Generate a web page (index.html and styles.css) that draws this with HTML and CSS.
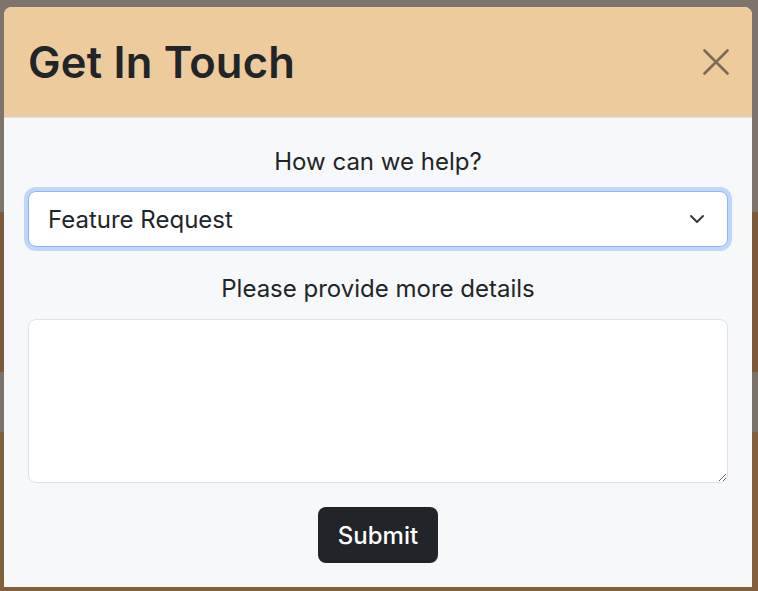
FILE: index.html
```html
<!DOCTYPE html>
<html lang="en">
<head>
<meta charset="utf-8">
<title>Get In Touch</title>
<link rel="stylesheet" href="styles.css">
</head>
<body>
<div class="backdrop">
  <div class="band band-gray"></div>
  <div class="band band-brown"></div>
  <div class="band band-gray2"></div>
  <div class="band band-brown2"></div>
</div>
<div class="modal">
  <div class="modal-header">
    <h1 class="modal-title">Get In Touch</h1>
    <button class="btn-close" aria-label="Close">
      <svg width="26" height="26" viewBox="0 0 26 26"><path d="M1.5 1.5 L24.5 24.5 M24.5 1.5 L1.5 24.5" stroke="currentColor" stroke-width="2.6" stroke-linecap="round"/></svg>
    </button>
  </div>
  <form class="modal-body">
    <label class="form-label" for="topic">How can we help?</label>
    <div class="select-wrap">
      <select id="topic" class="form-select">
        <option>Feature Request</option>
      </select>
      <svg class="chev" width="16" height="16" viewBox="0 0 16 16"><path d="M2 5 L8 11 L14 5" fill="none" stroke="#343a40" stroke-width="2" stroke-linecap="round" stroke-linejoin="round"/></svg>
    </div>
    <label class="form-label second" for="details">Please provide more details</label>
    <textarea id="details" class="form-control"></textarea>
    <div class="actions">
      <button type="button" class="btn-submit">Submit</button>
    </div>
  </form>
</div>
</body>
</html>
```
FILE: styles.css
```css
html, body {
  margin: 0;
  padding: 0;
  height: 100%;
  overflow: hidden;
}
body {
  font-family: Inter, "Noto Sans", sans-serif;
  color: #212529;
  position: relative;
}
.backdrop {
  position: absolute;
  inset: 0;
  display: flex;
  flex-direction: column;
}
.band { flex: none; }
.band-gray { height: 212px; background: #7d756c; }
.band-brown { height: 160px; background: #7c5a3a; }
.band-gray2 { height: 60px; background: #7a736b; }
.band-brown2 { flex: 1; background: #82603d; }

.modal {
  position: absolute;
  left: 4px;
  top: 7px;
  width: 748px;
  height: 580px;
  background: #f7f8fa;
  border-radius: 8px 8px 0 0;
  overflow: hidden;
}
.modal-header {
  height: 110px;
  background: #eecb9c;
  border-bottom: 1px solid #dee2e6;
  display: flex;
  align-items: center;
  justify-content: space-between;
  padding: 0 23px 0 24px;
}
.modal-title {
  margin: 0;
  font-size: 43.5px;
  font-weight: 600;
  letter-spacing: 0.2px;
  line-height: 1;
  padding-top: 2px;
}
.btn-close {
  border: 0;
  background: transparent;
  padding: 0;
  width: 26px;
  height: 26px;
  color: #7a6a58;
  display: flex;
  cursor: pointer;
}
.modal-body {
  display: flex;
  flex-direction: column;
  padding: 29px 24px 0;
}
.form-label {
  text-align: center;
  font-size: 24px;
  line-height: 30px;
  margin-bottom: 14px;
}
.form-label.second { margin-top: 27px; margin-bottom: 15px; }
.select-wrap {
  position: relative;
}
.form-select {
  appearance: none;
  -webkit-appearance: none;
  width: 100%;
  height: 56px;
  box-sizing: border-box;
  border: 1px solid #86b7fe;
  border-radius: 8px;
  background: #fff;
  box-shadow: 0 0 0 4px #c1d6fb;
  font-family: inherit;
  font-size: 24px;
  color: #212529;
  padding: 0 19px;
  outline: none;
}
.chev {
  position: absolute;
  right: 23px;
  top: 20px;
  pointer-events: none;
}
.form-control {
  width: 100%;
  height: 164px;
  box-sizing: border-box;
  border: 1px solid #dee2e6;
  border-radius: 8px;
  background: #fff;
  resize: vertical;
  font-family: inherit;
  display: block;
}
.actions {
  display: flex;
  justify-content: center;
  padding-top: 24px;
}
.btn-submit {
  width: 120px;
  height: 56px;
  border: 0;
  border-radius: 8px;
  background: #212529;
  color: #fff;
  font-family: inherit;
  font-size: 24px;
  font-weight: 500;
}
```
